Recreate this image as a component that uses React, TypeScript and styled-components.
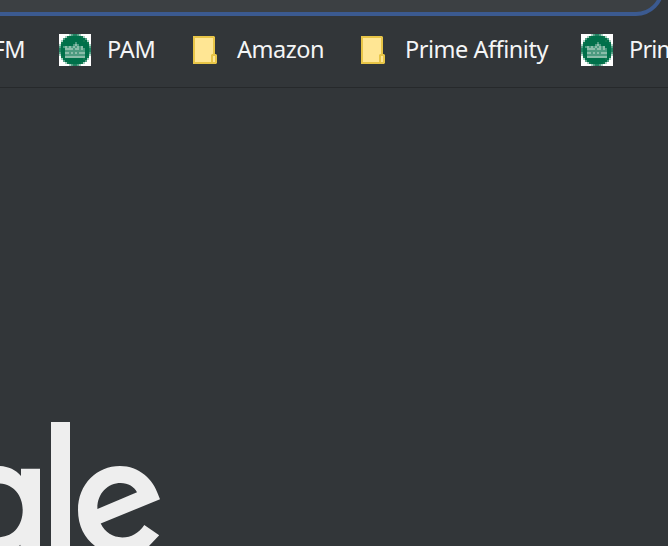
import React from "react";
import styled, { createGlobalStyle } from "styled-components";

const GlobalStyle = createGlobalStyle`
  * { box-sizing: border-box; }
  body { margin: 0; background: #323639; overflow: hidden; }
`;

const Window = styled.div`
  width: 668px;
  height: 546px;
  overflow: hidden;
  display: flex;
  flex-direction: column;
  background: #323639;
  font-family: "Noto Sans", "Open Sans", sans-serif;
`;

const AddressRow = styled.div`
  height: 16px;
  flex: none;
  display: flex;
  align-items: flex-end;
  overflow: hidden;
`;

const AddressField = styled.div`
  width: 704px;
  height: 56px;
  flex: none;
  margin-left: -40px;
  border: 4px solid #3b5a90;
  border-radius: 28px;
  background: #3c4043;
`;

const BookmarkBar = styled.nav`
  height: 72px;
  flex: none;
  display: flex;
  align-items: flex-start;
  border-bottom: 1px solid #26292b;
  padding-top: 18px;
`;

const Bookmark = styled.div<{ $width: number; $gap?: number }>`
  width: ${(p) => p.$width}px;
  height: 32px;
  flex: none;
  display: flex;
  align-items: center;
  gap: ${(p) => p.$gap ?? 16}px;
`;

const Label = styled.span<{ $tracking?: number; $shift?: number }>`
  margin-left: ${(p) => p.$shift ?? 0}px;
  padding-bottom: 2px;
  color: #f4f5f6;
  font-size: 23.5px;
  line-height: 30px;
  letter-spacing: ${(p) => p.$tracking ?? -0.48}px;
  white-space: nowrap;
`;

const Icon = styled.svg`
  display: block;
  flex: none;
`;

const NewTab = styled.main`
  flex: 1;
  display: flex;
  align-items: flex-end;
`;

const badgeRows = [
  ".....abccba.....",
  "...adggggggda...",
  "..bggggggggggb..",
  ".aggggggggggdga.",
  ".dggggggmgggggd.",
  "aggggggmlmggggga",
  "bgmlmlmlmlmlgggb",
  "cggllllmllmlmggc",
  "cggmmmmmmmmmmggc",
  "bggllmlmlmlllggb",
  "aggmmmmmmmmmmgga",
  ".dgllllllllllgd.",
  ".aggggggggggdga.",
  "..bggggggggggb..",
  "...adggggggda...",
  ".....abccba.....",
];

const badgeColors: Record<string, string> = {
  ".": "#ffffff",
  " ": "#00704a",
  a: "#a9d0c2",
  b: "#559f85",
  c: "#218362",
  d: "#10784f",
  g: "#00704a",
  l: "#8abda9",
  m: "#4c9b80",
};

function MarketIcon() {
  return (
    <Icon width="32" height="32" viewBox="0 0 16 16" shapeRendering="crispEdges">
      <rect width="16" height="16" fill="#fff" />
      {badgeRows.flatMap((row, y) =>
        row.split("").map((key, x) => (
          <rect key={`${x}-${y}`} x={x} y={y} width="1" height="1" fill={badgeColors[key]} />
        ))
      )}
    </Icon>
  );
}

function FolderIcon() {
  return (
    <Icon width="24" height="28" viewBox="0 0 24 28">
      <path d="M0 0H21L22 1V18H23L24 19V27L23 28H0Z" fill="#e8c547" />
      <path d="M2 2H20V18H19L18 19V26H2Z" fill="#ffe694" />
      <path d="M20 20H22V26H20Z" fill="#ffe694" />
    </Icon>
  );
}

function GoogleLogo() {
  return (
    <Icon width="180" height="136" viewBox="0 0 180 136" fill="#eeeeee">
      <path
        fillRule="evenodd"
        d="M-3 56C7 56 15 59 21 66V58.7H40V136H20.4V134.8L19 136H-40V100C-40 75-24 56-3 56ZM-2 73.5C-16 73.5-27 85-27 100C-27 116-16 127.2-2 127.2C13 127.2 22.7 116 22.7 100C22.7 85 13 73.5-2 73.5Z"
      />
      <path d="M51 12H70V136H51Z" />
      <path
        fillRule="evenodd"
        d="M120 56C97 56 78 74 78 100C78 116 84.5 128 95 136H149L159.2 125.3L144.3 115C138.5 123.3 131.5 127.4 122.3 127.4C112.6 127.4 105.2 122.7 100.7 113.6L160 89.2L158 84.3C153 69.2 139 56 120 56ZM120.7 73C128.2 73 134.3 76.7 137 82.3L97.4 99C97 83.5 107.7 73 120.7 73Z"
      />
    </Icon>
  );
}

export default function App() {
  return (
    <>
      <GlobalStyle />
      <Window>
        <AddressRow>
          <AddressField />
        </AddressRow>
        <BookmarkBar>
          <Bookmark $width={59}>
            <Label $shift={-7.5}>FM</Label>
          </Bookmark>
          <Bookmark $width={134}>
            <MarketIcon />
            <Label $tracking={-0.3}>PAM</Label>
          </Bookmark>
          <Bookmark $width={168} $gap={20}>
            <FolderIcon />
            <Label>Amazon</Label>
          </Bookmark>
          <Bookmark $width={220} $gap={20}>
            <FolderIcon />
            <Label>Prime Affinity</Label>
          </Bookmark>
          <Bookmark $width={134}>
            <MarketIcon />
            <Label $tracking={-0.8}>Prime</Label>
          </Bookmark>
        </BookmarkBar>
        <NewTab>
          <GoogleLogo />
        </NewTab>
      </Window>
    </>
  );
}
